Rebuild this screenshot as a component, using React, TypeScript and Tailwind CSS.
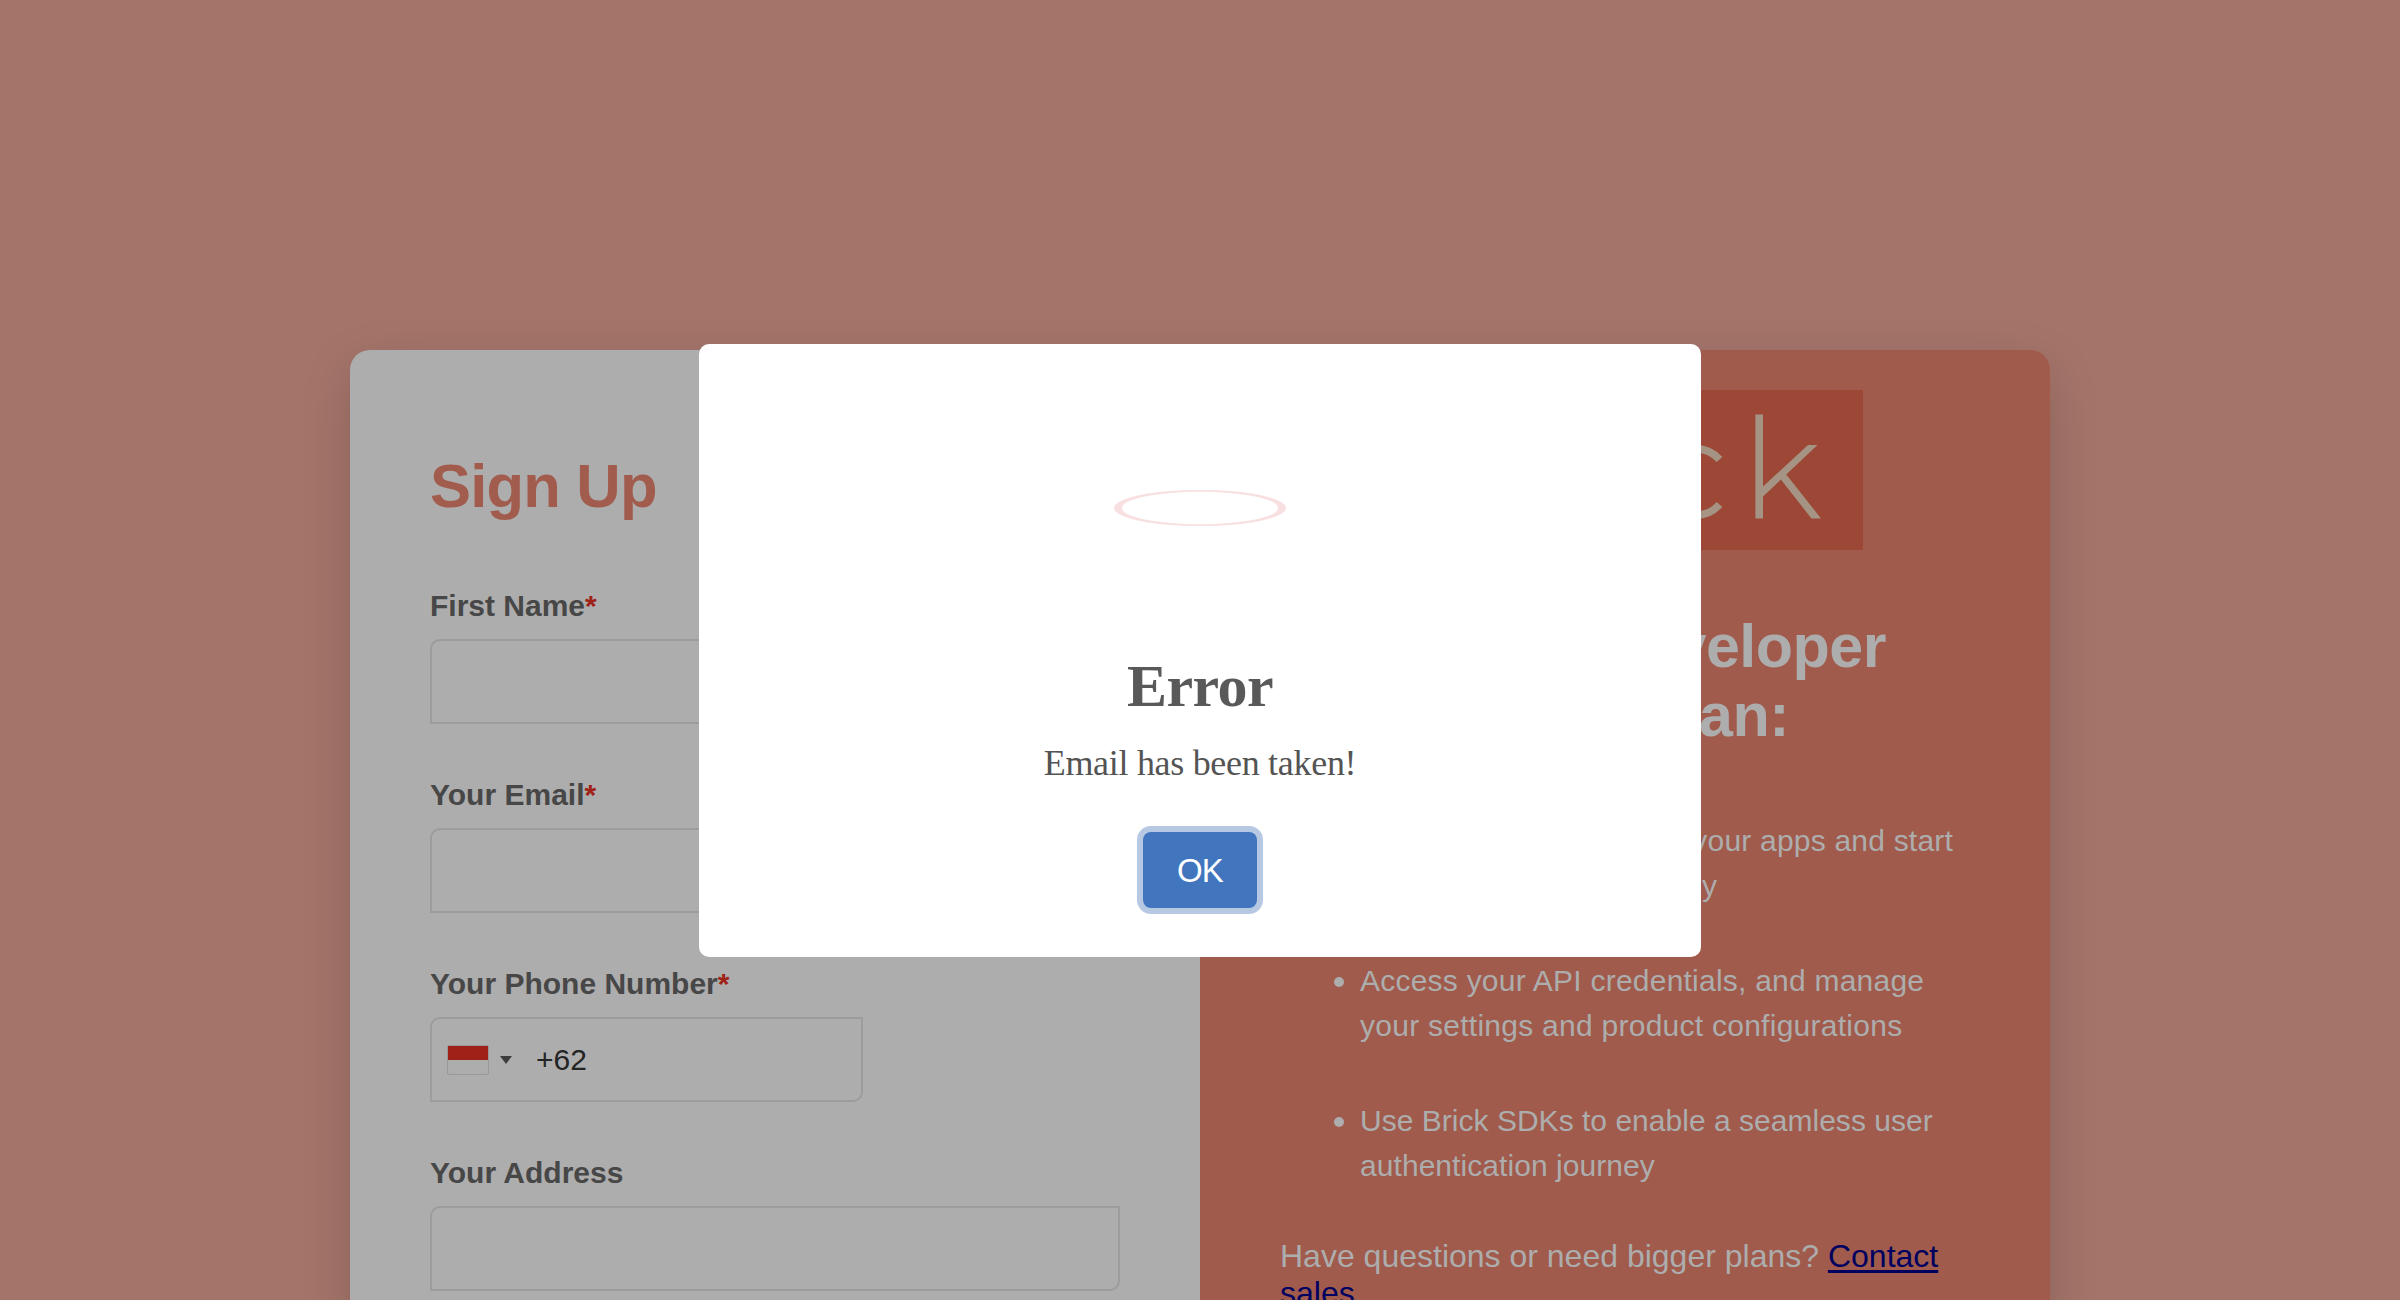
import React from "react";

type FieldProps = { label: string; required?: boolean; width?: string; children?: React.ReactNode };

function Field({ label, required, width = "w-[690px]", children }: FieldProps) {
  return (
    <div className="flex h-[189px] flex-col">
      <label className="h-[50px] text-[30px] leading-[34px] font-bold text-[#474747]">
        {label}
        {required && <span className="text-[#a02117]">*</span>}
      </label>
      <div
        className={`flex h-[85px] items-center rounded-tl-[10px] rounded-br-[10px] border-2 border-[#9c9c9c] ${width}`}
      >
        {children}
      </div>
    </div>
  );
}

function SignUpForm() {
  return (
    <section className="w-[850px] shrink-0 bg-[#adadad] pt-[101px] pl-[80px]">
      <h1 className="h-[138px] text-[61.5px] leading-[69px] font-bold tracking-[-0.8px] text-[#a25c4d]">Sign Up</h1>
      <Field label="First Name" required />
      <Field label="Your Email" required />
      <Field label="Your Phone Number" required width="w-[433px]">
        <div className="ml-[15px] h-[30px] w-[42px] rounded-[2px] border border-[#999] bg-[#adadad]">
          <div className="h-[14px] bg-[#a02117]" />
        </div>
        <svg className="ml-[11px]" width="12" height="8" viewBox="0 0 12 8">
          <path d="M0 0h12L6 8z" fill="#3d3d3d" />
        </svg>
        <span className="ml-[24px] text-[30px] leading-[34px] text-[#242424]">+62</span>
      </Field>
      <Field label="Your Address" />
    </section>
  );
}

function BrickLogo() {
  return (
    <svg
      className="mx-auto block"
      width="476"
      height="160"
      viewBox="1387 390 476 160"
      fill="none"
      stroke="#a59484"
      strokeWidth="7.6"
    >
      <path d="M1387 390h476v160h-476z" fill="#9d4837" stroke="none" />
      <path d="M1719.5 459.5A33.4 33.4 0 1 0 1719.5 504.5" />
      <path d="M1759.2 414.5V518.5" />
      <path d="M1808 445H1817.500L1763 496.500V486.500Z" fill="#a59484" stroke="none" />
      <path d="M1785.500 473.500L1821 518.500H1811.500L1780.500 479Z" fill="#a59484" stroke="none" />
    </svg>
  );
}

function Bullet({ children }: { children: React.ReactNode }) {
  return (
    <li className="flex h-[140px] text-[30px] leading-[45px] font-light whitespace-nowrap">
      <span className="mt-[19px] mr-[16px] ml-[54px] size-[10px] shrink-0 rounded-full bg-[#adadad]" />
      <div>{children}</div>
    </li>
  );
}

function PlanPanel() {
  return (
    <aside className="w-[850px] shrink-0 bg-[#a05b4c] px-[80px] pt-[40px] text-[#adadad]">
      <BrickLogo />
      <h2 className="pt-[62px] text-[61px] leading-[69px] font-bold tracking-[-0.5px]">
        <span className="block w-[606px] text-right">Your Free Developer</span>
        <span className="block w-[509px] text-right">Plan:</span>
      </h2>
      <ul className="mt-[68px]">
        <Bullet>
          <span className="block w-[593px] text-right tracking-[0.2px]">Create your apps and start</span>
          <span className="block w-[357px] text-right">testing instantly</span>
        </Bullet>
        <Bullet>
          <span className="block tracking-[0.23px]">Access your API credentials, and manage</span>
          <span className="block tracking-[0.26px]">your settings and product configurations</span>
        </Bullet>
        <Bullet>
          <span className="block tracking-[0.02px]">Use Brick SDKs to enable a seamless user</span>
          <span className="block tracking-[0.06px]">authentication journey</span>
        </Bullet>
      </ul>
      <p className="text-[32px] leading-[37px]">
        Have questions or need bigger plans?{" "}
        <a className="text-[#000060] underline decoration-[3px] underline-offset-[3px]">Contact sales</a>
      </p>
    </aside>
  );
}

function ErrorDialog() {
  return (
    <div
      role="dialog"
      className="absolute top-[343.500px] left-[699px] flex h-[613.500px] w-[1002px] flex-col items-center rounded-[10px] bg-white"
    >
      <svg className="mt-[146px]" width="172" height="36" viewBox="0 0 172 36">
        <path
          fillRule="evenodd"
          fill="#f9e0e0"
          d="M0 18a86 18 0 1 0 172 0a86 18 0 1 0-172 0M8 18a78 16.300 0 1 0 156 0a78 16.300 0 1 0-156 0"
        />
      </svg>
      <h2 className="mt-[126px] font-['Liberation_Serif'] text-[60px] leading-[69px] font-bold tracking-[-0.6px] text-[#595959]">
        Error
      </h2>
      <p className="mt-[22px] font-['Liberation_Serif'] text-[36px] leading-[41px] tracking-[-0.3px] text-[#545454]">
        Email has been taken!
      </p>
      <button className="mt-[48.500px] h-[76px] w-[114px] rounded-[8px] bg-[#4176bf] text-[33px] leading-[37px] tracking-[-0.8px] text-white shadow-[0_0_0_6px_#b7c9e2]">
        OK
      </button>
    </div>
  );
}

export default function App() {
  return (
    <div className="relative h-[1300px] w-[2400px] overflow-hidden bg-[#a4746a] pt-[350px] font-['Liberation_Sans',sans-serif]">
      <main className="mx-auto flex h-[1400px] w-[1700px] overflow-hidden rounded-[20px] shadow-[0_16px_50px_rgba(0,0,0,0.15)]">
        <SignUpForm />
        <PlanPanel />
      </main>
      <ErrorDialog />
    </div>
  );
}
